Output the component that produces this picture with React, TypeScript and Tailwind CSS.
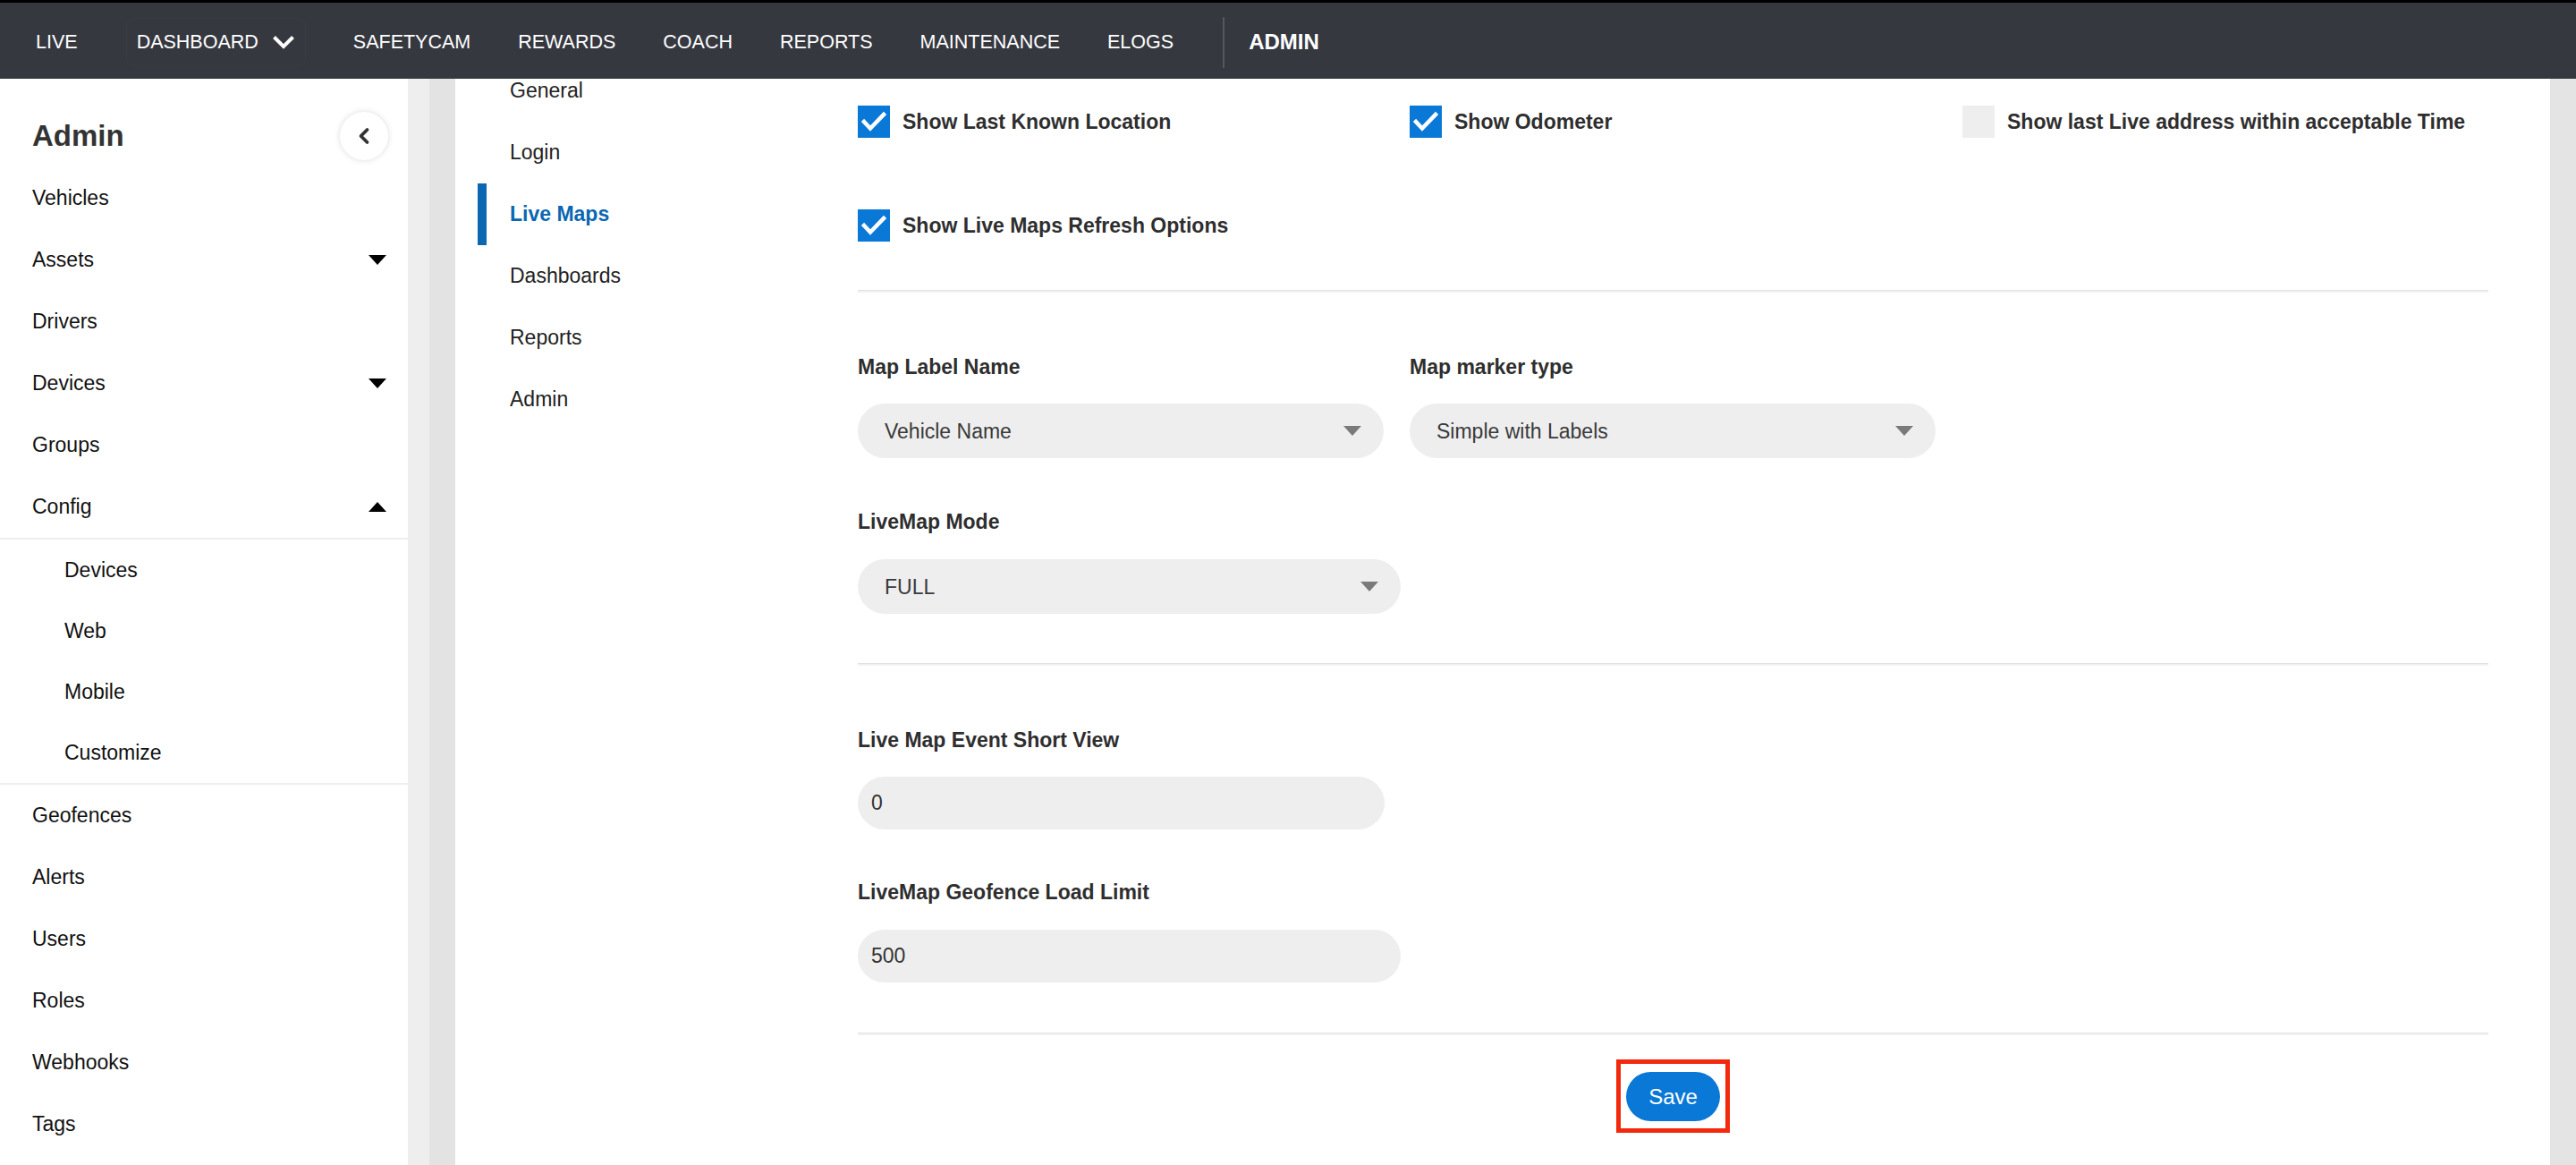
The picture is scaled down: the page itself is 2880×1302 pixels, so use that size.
import { ChevronLeft } from 'lucide-react';

const font = { fontFamily: '"Liberation Sans", Arial, sans-serif' };

const topLinks = ['SAFETYCAM', 'REWARDS', 'COACH', 'REPORTS', 'MAINTENANCE', 'ELOGS'];

type SideItem = { label: string; arrow?: 'up' | 'down' };

const mainItems: SideItem[] = [
  { label: 'Vehicles' },
  { label: 'Assets', arrow: 'down' },
  { label: 'Drivers' },
  { label: 'Devices', arrow: 'down' },
  { label: 'Groups' },
  { label: 'Config', arrow: 'up' },
];

const configItems = ['Devices', 'Web', 'Mobile', 'Customize'];
const restItems = ['Geofences', 'Alerts', 'Users', 'Roles', 'Webhooks', 'Tags'];
const settingsNav = ['General', 'Login', 'Live Maps', 'Dashboards', 'Reports', 'Admin'];

function Caret({ dir }: { dir: 'up' | 'down' }) {
  return (
    <svg width="20" height="11" viewBox="0 0 20 11" className="shrink-0">
      {dir === 'down' ? <polygon points="0,0 20,0 10,11" fill="#000" /> : <polygon points="0,11 20,11 10,0" fill="#000" />}
    </svg>
  );
}

function SelectArrow() {
  return (
    <svg width="20" height="11" viewBox="0 0 20 11" className="shrink-0">
      <polygon points="0,0 20,0 10,11" fill="#7a7a7a" />
    </svg>
  );
}

function Checkbox({ checked }: { checked: boolean }) {
  if (!checked) return <div className="w-[36px] h-[36px] shrink-0 bg-[#eeeeee]" />;
  return (
    <div className="w-[36px] h-[36px] shrink-0 bg-[#0a78d6] flex items-center justify-center">
      <svg width="36" height="36" viewBox="0 0 36 36">
        <polyline points="7,18 14,25.5 29,10" fill="none" stroke="#fff" strokeWidth="4.5" strokeLinecap="square" />
      </svg>
    </div>
  );
}

function Check({ label, checked }: { label: string; checked: boolean }) {
  return (
    <div className="flex items-center gap-[14px]">
      <Checkbox checked={checked} />
      <span className="text-[23px] font-bold text-[#2e2e2e] whitespace-nowrap">{label}</span>
    </div>
  );
}

function Divider() {
  return <div className="h-[3px] border-t border-t-[#e2e2e2] border-b-2 border-b-[#f1f1f1]" />;
}

function Select({ value, width }: { value: string; width: string }) {
  return (
    <div className={`${width} h-[61px] rounded-full bg-[#eeeeee] flex items-center justify-between pl-[30px] pr-[25px]`}>
      <span className="text-[23px] text-[#3a3a3a] pt-[2px]">{value}</span>
      <SelectArrow />
    </div>
  );
}

function Input({ value, width }: { value: string; width: string }) {
  return (
    <div className={`${width} h-[59px] rounded-full bg-[#eeeeee] flex items-center pl-[15px]`}>
      <span className="text-[23px] text-[#333]">{value}</span>
    </div>
  );
}

function Label({ children }: { children: string }) {
  return <div className="h-[28px] leading-[28px] text-[23px] font-bold text-[#2e2e2e]">{children}</div>;
}

export default function App() {
  return (
    <div className="h-[1302px] w-[2880px] flex flex-col overflow-hidden bg-white" style={font}>
      <div className="h-[3px] bg-black" />
      <nav className="h-[85px] pt-[3px] bg-[#36383f] flex items-center text-white text-[21.5px]">
        <span className="ml-[40px]">LIVE</span>
        <div className="ml-[54px] h-[54px] px-[11px] flex items-center rounded-[8px] border border-[#3a3c43]">
          <span>DASHBOARD</span>
          <svg width="26" height="16" viewBox="0 0 26 16" className="ml-[15px]">
            <polyline points="2.5,2.5 13,13 23.5,2.5" fill="none" stroke="#fff" strokeWidth="4" />
          </svg>
        </div>
        {topLinks.map((l, i) => (
          <span key={l} className={i === 0 ? 'ml-[53px]' : 'ml-[53px]'}>
            {l}
          </span>
        ))}
        <div className="ml-[55px] w-[2px] h-[57px] bg-[#55575e]" />
        <span className="ml-[27px] text-[24px] font-bold">ADMIN</span>
      </nav>

      <div className="flex-1 flex min-h-0">
        <aside className="w-[456px] shrink-0 bg-white flex flex-col">
          <div className="h-[99px] pt-[28px] flex items-center justify-between pl-[36px] pr-[22px]">
            <span className="text-[33px] font-bold text-[#333]">Admin</span>
            <button className="w-[54px] h-[54px] rounded-full bg-white shadow-[0_0_7px_rgba(0,0,0,0.14)] flex items-center justify-center">
              <ChevronLeft size={28} strokeWidth={3.2} color="#333" />
            </button>
          </div>
          {mainItems.map(item => (
            <div key={item.label} className="h-[69px] flex items-center justify-between pl-[36px] pr-[24px] text-[23px] text-[#111]">
              <span>{item.label}</span>
              {item.arrow && <Caret dir={item.arrow} />}
            </div>
          ))}
          <div className="h-[2px] bg-[#eeeeee]" />
          {configItems.map(label => (
            <div key={label} className="h-[68px] flex items-center pl-[72px] text-[23px] text-[#111]">
              {label}
            </div>
          ))}
          <div className="h-[2px] bg-[#eeeeee]" />
          {restItems.map(label => (
            <div key={label} className="h-[69px] flex items-center pl-[36px] text-[23px] text-[#111]">
              {label}
            </div>
          ))}
        </aside>

        <div className="w-[24px] shrink-0 bg-[#eeeeee]" />
        <div className="w-[29px] shrink-0 bg-[#e3e3e3]" />

        <main className="w-[2342px] shrink-0 bg-white flex overflow-hidden">
          <div className="w-[450px] shrink-0 pl-[25px] mt-[-21px]">
            {settingsNav.map(label => {
              const active = label === 'Live Maps';
              return (
                <div
                  key={label}
                  className={
                    active
                      ? 'h-[69px] flex items-center border-l-[10px] border-[#0b67b2] pl-[26px] text-[23px] font-bold text-[#0b67b2]'
                      : 'h-[69px] flex items-center pl-[36px] text-[23px] text-[#222]'
                  }
                >
                  {label}
                </div>
              );
            })}
          </div>

          <div className="w-[1823px] shrink-0 flex flex-col pt-[30px]">
            <div className="grid grid-cols-[617px_618px_1fr]">
              <Check label="Show Last Known Location" checked />
              <Check label="Show Odometer" checked />
              <Check label="Show last Live address within acceptable Time" checked={false} />
            </div>
            <div className="mt-[80px]">
              <Check label="Show Live Maps Refresh Options" checked />
            </div>

            <div className="mt-[54px]">
              <Divider />
            </div>

            <div className="mt-[69px] grid grid-cols-[617px_1fr]">
              <div>
                <Label>Map Label Name</Label>
                <div className="mt-[27px]">
                  <Select value="Vehicle Name" width="w-[588px]" />
                </div>
              </div>
              <div>
                <Label>Map marker type</Label>
                <div className="mt-[27px]">
                  <Select value="Simple with Labels" width="w-[588px]" />
                </div>
              </div>
            </div>

            <div className="mt-[57px]">
              <Label>LiveMap Mode</Label>
              <div className="mt-[28px]">
                <Select value="FULL" width="w-[607px]" />
              </div>
            </div>

            <div className="mt-[55px]">
              <Divider />
            </div>

            <div className="mt-[69px]">
              <Label>Live Map Event Short View</Label>
              <div className="mt-[27px]">
                <Input value="0" width="w-[589px]" />
              </div>
            </div>

            <div className="mt-[56px]">
              <Label>LiveMap Geofence Load Limit</Label>
              <div className="mt-[28px]">
                <Input value="500" width="w-[607px]" />
              </div>
            </div>

            <div className="mt-[56px]">
              <Divider />
            </div>

            <div className="mt-[27px] flex justify-center">
              <div className="border-[5px] border-[#f2290c] px-[6px] pt-[9px] pb-[8px]">
                <button className="w-[105px] h-[55px] rounded-full bg-[#0a78d6] text-white text-[24px]">Save</button>
              </div>
            </div>
          </div>
        </main>

        <div className="flex-1 bg-[#e4e4e4]" />
      </div>
    </div>
  );
}
